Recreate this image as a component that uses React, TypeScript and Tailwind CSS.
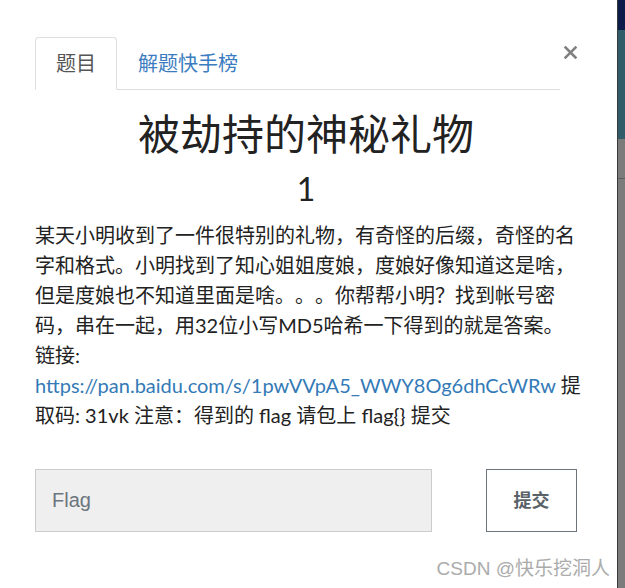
import React from "react";

const lines: string[] = [
  "某天小明收到了一件很特别的礼物，有奇怪的后缀，奇怪的名",
  "字和格式。小明找到了知心姐姐度娘，度娘好像知道这是啥，",
  "但是度娘也不知道里面是啥。。。你帮帮小明？找到帐号密",
  "码，串在一起，用32位小写MD5哈希一下得到的就是答案。",
  "链接:",
];

const App: React.FC = () => {
  return (
    <div className="relative flex h-[588px] w-[625px] overflow-hidden bg-white">
      <div className="flex-1 pl-[35px] pt-[37px] font-['Lato','Noto_Sans_CJK_SC',sans-serif] text-[#222]">
        {/* 탭 + 닫기 */}
        <div className="flex w-[542px]">
          <ul className="flex flex-1 border-b border-[#ddd]">
            <li className="-mb-px rounded-t border border-[#ddd] border-b-white bg-white px-[20px] py-[10px] text-[20px] leading-[30px] text-[#555]">
              题目
            </li>
            <li className="px-[21px] py-[11px] text-[20px] leading-[30px] text-[#3a7cbf]">
              解题快手榜
            </li>
          </ul>
          <button className="flex w-[17px] items-start justify-end pt-[9px]">
            <svg width="13" height="13" viewBox="0 0 13 13">
              <path d="M1.5 1.5 L11.5 11.5 M11.5 1.5 L1.5 11.5" stroke="#808080" strokeWidth="2.5" strokeLinecap="square" />
            </svg>
          </button>
        </div>

        {/* 제목 */}
        <h2 className="mt-[19px] w-[542px] text-center text-[42px] leading-[50px]">被劫持的神秘礼物</h2>
        <p className="mt-[10px] w-[542px] text-center text-[32px] leading-[40px]">1</p>

        {/* 본문 */}
        <div className="mt-[11px] w-[570px] whitespace-nowrap text-[20px] leading-[30px] [text-spacing-trim:space-all]">
          {lines.map((line, idx) => (
            <div key={idx}>{line}</div>
          ))}
          <div>
            <a className="text-[#337ab7]">https://pan.baidu.com/s/1pwVVpA5_WWY8Og6dhCcWRw</a> 提
          </div>
          <div>取码: 31vk 注意：得到的 flag 请包上 flag{"{}"} 提交</div>
        </div>

        {/* 입력 */}
        <div className="mt-[39px] flex w-[542px] justify-between">
          <input
            placeholder="Flag"
            className="h-[63px] w-[397px] border border-[#ccc] bg-[#efefef] pl-[16px] font-['Liberation_Sans',Arial,sans-serif] text-[20px] text-[#333] outline-none placeholder:text-[#6c757d]"
          />
          <button className="h-[63px] w-[91px] border border-[#6c757d] bg-white text-[18px] font-bold text-[#5a6268]">
            提交
          </button>
        </div>
      </div>

      {/* 오른쪽 배경 */}
      <div className="flex w-[8px] flex-col border-l border-[#3a3a3a]">
        <div className="h-[30px] bg-[#0b1b4a]"></div>
        <div className="h-[109px] bg-[#315d6b]"></div>
        <div className="h-[40px] border-b border-[#5e5e5e] bg-[#7b7b7b]"></div>
        <div className="flex-1 bg-[#7b7b7b]"></div>
      </div>

      <div className="absolute bottom-[7px] right-[15px] font-['Liberation_Sans','Noto_Sans_CJK_SC',sans-serif] text-[19px] leading-[24px] text-[#ababab]">
        CSDN @快乐挖洞人
      </div>
    </div>
  );
};

export default App;
